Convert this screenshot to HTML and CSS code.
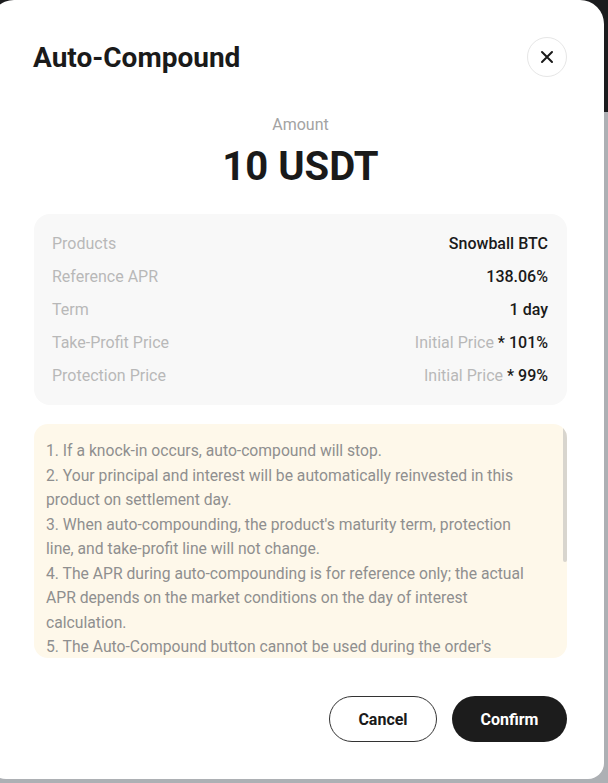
FILE: index.html
```html
<!DOCTYPE html>
<html lang="en">
<head>
    <meta charset="UTF-8">
    <meta name="viewport" content="width=device-width, initial-scale=1.0">
    <title>Auto-Compound</title>
    <link rel="stylesheet" href="styles.css">
</head>
<body>
    <div class="modal">
        <div class="modal-header">
            <div class="modal-title">Auto-Compound</div>
            <button class="close-btn" aria-label="Close">
                <svg width="14" height="14" viewBox="0 0 14 14">
                    <path d="M2 2 L12 12 M12 2 L2 12" stroke="#1a1a1a" stroke-width="2" stroke-linecap="round" fill="none"/>
                </svg>
            </button>
        </div>
        <div class="amount">
            <div class="amount-label">Amount</div>
            <div class="amount-value">10 USDT</div>
        </div>
        <div class="info-box">
            <div class="info-row">
                <span class="info-label">Products</span>
                <span class="info-value">Snowball BTC</span>
            </div>
            <div class="info-row">
                <span class="info-label">Reference APR</span>
                <span class="info-value">138.06%</span>
            </div>
            <div class="info-row">
                <span class="info-label">Term</span>
                <span class="info-value">1 day</span>
            </div>
            <div class="info-row">
                <span class="info-label">Take-Profit Price</span>
                <span class="info-value"><span class="muted">Initial Price</span> * 101%</span>
            </div>
            <div class="info-row">
                <span class="info-label">Protection Price</span>
                <span class="info-value"><span class="muted">Initial Price</span> * 99%</span>
            </div>
        </div>
        <div class="notes-wrap">
            <div class="notes">
                <p>1. If a knock-in occurs, auto-compound will stop.</p>
                <p>2. Your principal and interest will be automatically reinvested in this product on settlement day.</p>
                <p>3. When auto-compounding, the product's maturity term, protection line, and take-profit line will not change.</p>
                <p>4. The APR during auto-compounding is for reference only; the actual APR depends on the market conditions on the day of interest calculation.</p>
                <p>5. The Auto-Compound button cannot be used during the order's settlement period.</p>
            </div>
            <div class="scroll-thumb"></div>
        </div>
        <div class="actions">
            <button class="btn btn-cancel">Cancel</button>
            <button class="btn btn-confirm">Confirm</button>
        </div>
    </div>
</body>
</html>
```

FILE: styles.css
```css
*{
    margin: 0;
    padding: 0;
    box-sizing: border-box;
}

body{
    width: 608px;
    height: 783px;
    overflow: hidden;
    background: linear-gradient(#1b1c1e 0 112px, #adb0b4 112px);
    font-family: Roboto, "Liberation Sans", sans-serif;
    color: #1a1a1a;
}

.modal{
    margin-left: -10px;
    width: 614px;
    height: 779px;
    background: #fff;
    border-radius: 24px 24px 16px 16px;
    padding: 37px 37px 0 44px;
    display: flex;
    flex-direction: column;
}

.modal-header{
    display: flex;
    align-items: center;
    justify-content: space-between;
    height: 40px;
}

.modal-title{
    font-size: 28px;
    font-weight: 700;
    margin-left: -1px;
    margin-top: 1px;
}

.close-btn{
    width: 40px;
    height: 40px;
    border-radius: 50%;
    border: 1px solid #e6e6e6;
    background: #fff;
    display: flex;
    align-items: center;
    justify-content: center;
}

.amount{
    margin-top: 38px;
    display: flex;
    flex-direction: column;
    align-items: center;
}

.amount-label{
    font-size: 16px;
    line-height: 20px;
    color: #a3a3a3;
}

.amount-value{
    margin-top: 7px;
    font-size: 40px;
    line-height: 50px;
    font-weight: 700;
}

.info-box{
    margin-top: 22px;
    background: #f8f8f8;
    border-radius: 16px;
    padding: 13px 19px 13px 18px;
}

.info-row{
    display: flex;
    justify-content: space-between;
    align-items: center;
    height: 33px;
    font-size: 16px;
}

.info-label{
    color: #b8b8b8;
}

.info-value{
    color: #1a1a1a;
    font-weight: 500;
}

.muted{
    color: #b8b8b8;
    font-weight: 400;
}

.notes-wrap{
    position: relative;
    margin-top: 19px;
    height: 234px;
    background: #fef8ea;
    border-radius: 14px;
    overflow: hidden;
}

.notes{
    height: 100%;
    overflow: hidden;
    padding: 15px 36px 0 12px;
    font-size: 15.7px;
    line-height: 24.5px;
    color: #8f8f8f;
}

.scroll-thumb{
    position: absolute;
    top: 0;
    right: 0;
    width: 4px;
    height: 138px;
    background: #d8d5ce;
    border-radius: 2px;
}

.actions{
    margin-top: 38px;
    display: flex;
    justify-content: flex-end;
    gap: 15px;
}

.btn{
    height: 46px;
    border-radius: 23px;
    font-family: Roboto, "Liberation Sans", sans-serif;
    font-size: 16px;
    font-weight: 700;
}

.btn-cancel{
    width: 108px;
    background: #fff;
    border: 1px solid #333;
    color: #1a1a1a;
}

.btn-confirm{
    width: 115px;
    background: #1c1c1c;
    border: none;
    color: #fff;
}
```
